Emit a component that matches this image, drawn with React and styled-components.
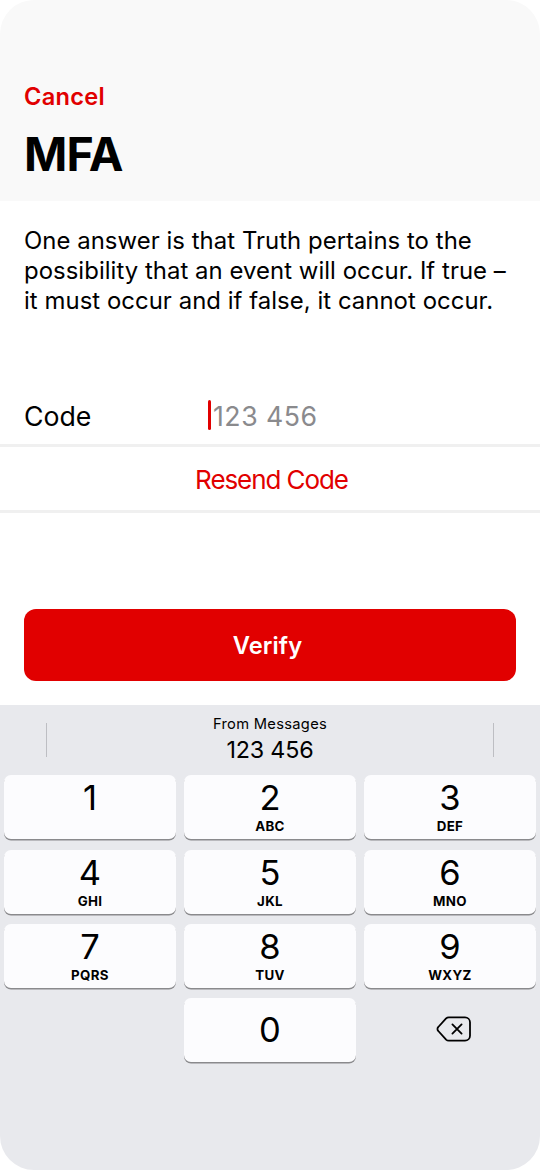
import React from "react";
import styled, { createGlobalStyle } from "styled-components";

const GlobalStyle = createGlobalStyle`
  *, *::before, *::after { box-sizing: border-box; }
  body { margin: 0; background: #fff; }
  button, input { font: inherit; border: 0; margin: 0; padding: 0; }
`;

const Screen = styled.main`
  width: 540px;
  height: 1170px;
  display: flex;
  flex-direction: column;
  overflow: hidden;
  border-radius: 34px;
  background: #fff;
  color: #000;
  font-family: Inter, "Liberation Sans", sans-serif;
`;

const Header = styled.header`
  height: 201px;
  padding: 82px 24px 0;
  display: flex;
  flex-direction: column;
  align-items: flex-start;
  background: #f9f9f9;
`;

const CancelButton = styled.button`
  background: none;
  color: #e10000;
  font-size: 23.6px;
  font-weight: 560;
  line-height: 30px;
  letter-spacing: 0.3px;
`;

const Title = styled.h1`
  margin: 13px 0 0;
  font-size: 46.5px;
  font-weight: 650;
  line-height: 58px;
  letter-spacing: -0.8px;
`;

const Description = styled.p`
  margin: 0;
  padding: 25px 24px 0;
  height: 188px;
  font-size: 23.9px;
  line-height: 30px;
  letter-spacing: 0.05px;
  white-space: nowrap;
`;

const FormRow = styled.div`
  display: flex;
  align-items: center;
  height: ${(p) => p.$height}px;
  padding: 0 24px;
  justify-content: ${(p) => (p.$centered ? "center" : "flex-start")};
  border-bottom: 3px solid #f0f0f0;
`;

const FieldLabel = styled.label`
  width: 184px;
  padding-bottom: 2px;
  font-size: 26.7px;
  line-height: 34px;
`;

const Caret = styled.span`
  width: 3px;
  height: 30px;
  margin-top: -3px;
  border-radius: 2px;
  background: #e10000;
`;

const Placeholder = styled.span`
  margin-left: 2px;
  padding-bottom: 2px;
  color: #8a8a8d;
  font-size: 26.7px;
  line-height: 34px;
  letter-spacing: 0.5px;
`;

const ResendButton = styled.button`
  background: none;
  color: #e10000;
  font-size: 26px;
  line-height: 34px;
  letter-spacing: -1.08px;
  padding: 2px 0 0 3px;
`;

const Actions = styled.div`
  padding: 96px 24px 24px;
`;

const VerifyButton = styled.button`
  width: 100%;
  height: 72px;
  display: block;
  padding-right: 5px;
  border-radius: 12px;
  background: #e10000;
  color: #fff;
  font-size: 23.7px;
  font-weight: 560;
  letter-spacing: 0.1px;
`;

const Keyboard = styled.section`
  flex: 1;
  background: #e8e9ed;
`;

const SuggestionBar = styled.div`
  height: 70.3px;
  padding: 0 46px;
  display: flex;
  justify-content: space-between;
`;

const Divider = styled.i`
  width: 1px;
  height: 34px;
  margin-top: 18px;
  background: #bdbec3;
`;

const Suggestion = styled.div`
  display: flex;
  flex-direction: column;
  align-items: center;
  padding-top: 9px;
`;

const SuggestionSource = styled.span`
  font-size: 14.7px;
  line-height: 20px;
  letter-spacing: 0.3px;
`;

const SuggestionValue = styled.span`
  font-size: 23.3px;
  line-height: 31px;
  letter-spacing: -0.2px;
`;

const KeyGrid = styled.div`
  display: grid;
  grid-template-columns: repeat(3, 172px);
  grid-auto-rows: 64px;
  gap: 10.4px 8px;
  padding: 0 4px;
`;

const Key = styled.button`
  grid-column: ${(p) => p.$column || "auto"};
  display: flex;
  flex-direction: column;
  align-items: center;
  justify-content: ${(p) => (p.$centered ? "center" : "flex-start")};
  padding-top: ${(p) => (p.$centered ? 0 : 3)}px;
  padding-left: ${(p) => (p.$plain ? 8 : 0)}px;
  padding-bottom: ${(p) => (p.$plain ? 2 : 0)}px;
  border-radius: 7px;
  background: ${(p) => (p.$plain ? "transparent" : "#fcfcfe")};
  box-shadow: ${(p) => (p.$plain ? "none" : "0 1.5px 0 #8a8a8d")};
  color: #000;
`;

const Digit = styled.span`
  font-size: 34.5px;
  line-height: 40px;
`;

const Letters = styled.span`
  font-size: 13.3px;
  font-weight: 650;
  line-height: 16px;
  letter-spacing: 0.35px;
`;

const keys = [
  ["1", ""],
  ["2", "ABC"],
  ["3", "DEF"],
  ["4", "GHI"],
  ["5", "JKL"],
  ["6", "MNO"],
  ["7", "PQRS"],
  ["8", "TUV"],
  ["9", "WXYZ"],
];

const BackspaceIcon = () => (
  <svg width="36" height="28" viewBox="0 0 36 28" fill="none" stroke="#000" strokeWidth="1.8" strokeLinecap="round" strokeLinejoin="round">
    <path d="M12.8 2.3H29a5 5 0 0 1 5 5v13.4a5 5 0 0 1-5 5H12.8a4 4 0 0 1-2.7-1.1L2.3 16a2.8 2.8 0 0 1 0-4l7.8-8.6a4 4 0 0 1 2.7-1.1Z" />
    <path d="m16.4 9.4 9.2 9.2m0-9.2-9.2 9.2" />
  </svg>
);

export default function App() {
  return (
    <>
      <GlobalStyle />
      <Screen>
        <Header>
          <CancelButton>Cancel</CancelButton>
          <Title>MFA</Title>
        </Header>
        <Description>
          One answer is that Truth pertains to the
          <br />
          possibility that an event will occur. If true –
          <br />
          it must occur and if false, it cannot occur.
        </Description>
        <FormRow $height={58}>
          <FieldLabel>Code</FieldLabel>
          <Caret />
          <Placeholder>123 456</Placeholder>
        </FormRow>
        <FormRow $height={66} $centered>
          <ResendButton>Resend Code</ResendButton>
        </FormRow>
        <Actions>
          <VerifyButton>Verify</VerifyButton>
        </Actions>
        <Keyboard>
          <SuggestionBar>
            <Divider />
            <Suggestion>
              <SuggestionSource>From Messages</SuggestionSource>
              <SuggestionValue>123 456</SuggestionValue>
            </Suggestion>
            <Divider />
          </SuggestionBar>
          <KeyGrid>
            {keys.map(([digit, letters]) => (
              <Key key={digit}>
                <Digit>{digit}</Digit>
                <Letters>{letters}</Letters>
              </Key>
            ))}
            <Key $column="2" $centered>
              <Digit>0</Digit>
            </Key>
            <Key $centered $plain aria-label="Delete">
              <BackspaceIcon />
            </Key>
          </KeyGrid>
        </Keyboard>
      </Screen>
    </>
  );
}
